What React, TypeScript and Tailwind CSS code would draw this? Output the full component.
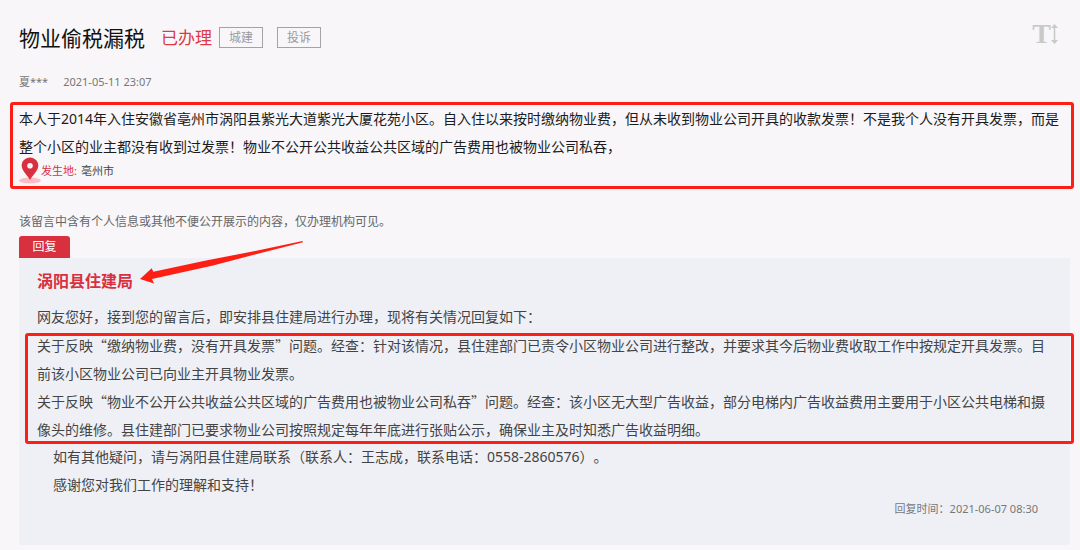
import type { ReactNode } from 'react';

const tags = ['城建', '投诉'];

function Tag({ children }: { children: ReactNode }) {
  return (
    <span className="flex h-[21px] w-11 items-center justify-center border border-[#a3a2a5] text-[12px] text-[#9b9a9d]">
      {children}
    </span>
  );
}

// red marker frame laid over the block it sits in
function Frame({ className }: { className: string }) {
  return (
    <div
      aria-hidden="true"
      className={`pointer-events-none absolute rounded-[3px] border-[3px] border-[#fd1f14] ${className}`}
    />
  );
}

function PinIcon() {
  return (
    <svg width="22" height="27" viewBox="0 0 22 27" aria-hidden="true">
      <ellipse cx="11" cy="23.500" rx="11" ry="3" fill="#fcbcc3" />
      <path
        fill="#d9303f"
        fillRule="evenodd"
        d="M11 .5C6.200.5 2.700 4.200 2.700 8.600c0 5.200 5.400 9.200 8.300 14.400 2.900-5.200 8.300-9.200 8.300-14.400C19.300 4.200 15.800.5 11 .5Zm0 5.500a2.800 2.800 0 1 1 0 5.600 2.800 2.800 0 0 1 0-5.600Z"
      />
    </svg>
  );
}

function ArrowMark() {
  return (
    <svg
      width="168"
      height="46"
      viewBox="0 0 168 46"
      aria-hidden="true"
      className="pointer-events-none absolute bottom-full left-full -mb-[19px] ml-[3px]"
    >
      <path
        fill="#fd1f14"
        d="M4 39 15.700 28.300 17.300 31.700 70 20.500 114 12 166.500 1 167 2.300 117 15 77 25.500 16 39 18 43.500Z"
      />
    </svg>
  );
}

export default function App() {
  return (
    <main className="min-h-screen bg-[#f8f6f9] pt-6 pr-2.5 pb-1 pl-[19px] font-['Noto_Sans','Noto_Sans_CJK_SC',sans-serif] text-[14px] leading-[28px] [text-spacing-trim:space-all]">
      <header className="flex items-start justify-between">
        <div className="flex h-[27px] items-center">
          <h1 className="text-[21px] text-[#111]">物业偷税漏税</h1>
          <span className="mr-[7px] ml-4 text-[17px] text-[#dc3a44]">已办理</span>
          <div className="flex gap-3.5">
            {tags.map((tag) => (
              <Tag key={tag}>{tag}</Tag>
            ))}
          </div>
        </div>
        <button type="button" aria-label="字号" className="mr-3 flex h-5 items-center text-[#c9c9c9]">
          <span className="font-['Liberation_Serif',serif] text-[28px] leading-5 font-bold">T</span>
          <svg width="7" height="20" viewBox="0 0 7 20" fill="currentColor" aria-hidden="true">
            <path d="M3.500 0 7 4H4.300v12H7l-3.500 4L0 16h2.700V4H0Z" />
          </svg>
        </button>
      </header>

      <div className="mt-[21px] flex h-5 items-center gap-[15px] text-[11px] text-[#777]">
        <span>夏***</span>
        <time dateTime="2021-05-11T23:07">2021-05-11 23:07</time>
      </div>

      <section className="relative mt-[13px] pb-[5px]">
        <p className="text-[#1c1c1c]">
          本人于2014年入住安徽省亳州市涡阳县紫光大道紫光大厦花苑小区。自入住以来按时缴纳物业费，但从未收到物业公司开具的收款发票！不是我个人没有开具发票，而是整个小区的业主都没有收到过发票！物业不公开公共收益公共区域的广告费用也被物业公司私吞，
        </p>
        <div className="-mt-1 flex h-[27px] items-center text-[11px] text-[#444]">
          <PinIcon />
          <span className="text-[#d9303f]">发生地:</span>
          <span className="ml-1">亳州市</span>
        </div>
        <Frame className="-top-[3px] -right-1 -left-[9px] bottom-0" />
      </section>

      <p className="mt-[19px] text-[12px] text-[#666]">该留言中含有个人信息或其他不便公开展示的内容，仅办理机构可见。</p>

      <h2 className="flex h-[22px] w-[51px] items-center justify-center rounded-t-[3px] bg-[#d9303f] text-[12px] text-white">
        回复
      </h2>
      <article className="bg-[#eff0f6] px-[18px] pt-[9px] pb-[26px] text-[#444]">
        <h3 className="relative w-fit text-[16px] font-bold text-[#d9303f]">
          涡阳县住建局
          <ArrowMark />
        </h3>
        <p className="mt-2">网友您好，接到您的留言后，即安排县住建局进行办理，现将有关情况回复如下：</p>
        <div className="relative font-['Noto_Sans_CJK_SC',sans-serif]">
          <p>
            关于反映“缴纳物业费，没有开具发票”问题。经查：针对该情况，县住建部门已责令小区物业公司进行整改，并要求其今后物业费收取工作中按规定开具发票。目前该小区物业公司已向业主开具物业发票。
          </p>
          <p>
            关于反映“物业不公开公共收益公共区域的广告费用也被物业公司私吞”问题。经查：该小区无大型广告收益，部分电梯内广告收益费用主要用于小区公共电梯和摄像头的维修。县住建部门已要求物业公司按照规定每年年底进行张贴公示，确保业主及时知悉广告收益明细。
          </p>
          <Frame className="top-0.5 -right-[22px] -bottom-px -left-3" />
        </div>
        <div className="pl-4">
          <p>如有其他疑问，请与涡阳县住建局联系（联系人：王志成，联系电话：0558-2860576）。</p>
          <p>感谢您对我们工作的理解和支持！</p>
        </div>
        <div className="mr-3.5 text-right text-[11px] leading-5 text-[#777]">
          回复时间：<time dateTime="2021-06-07T08:30">2021-06-07 08:30</time>
        </div>
      </article>
    </main>
  );
}
